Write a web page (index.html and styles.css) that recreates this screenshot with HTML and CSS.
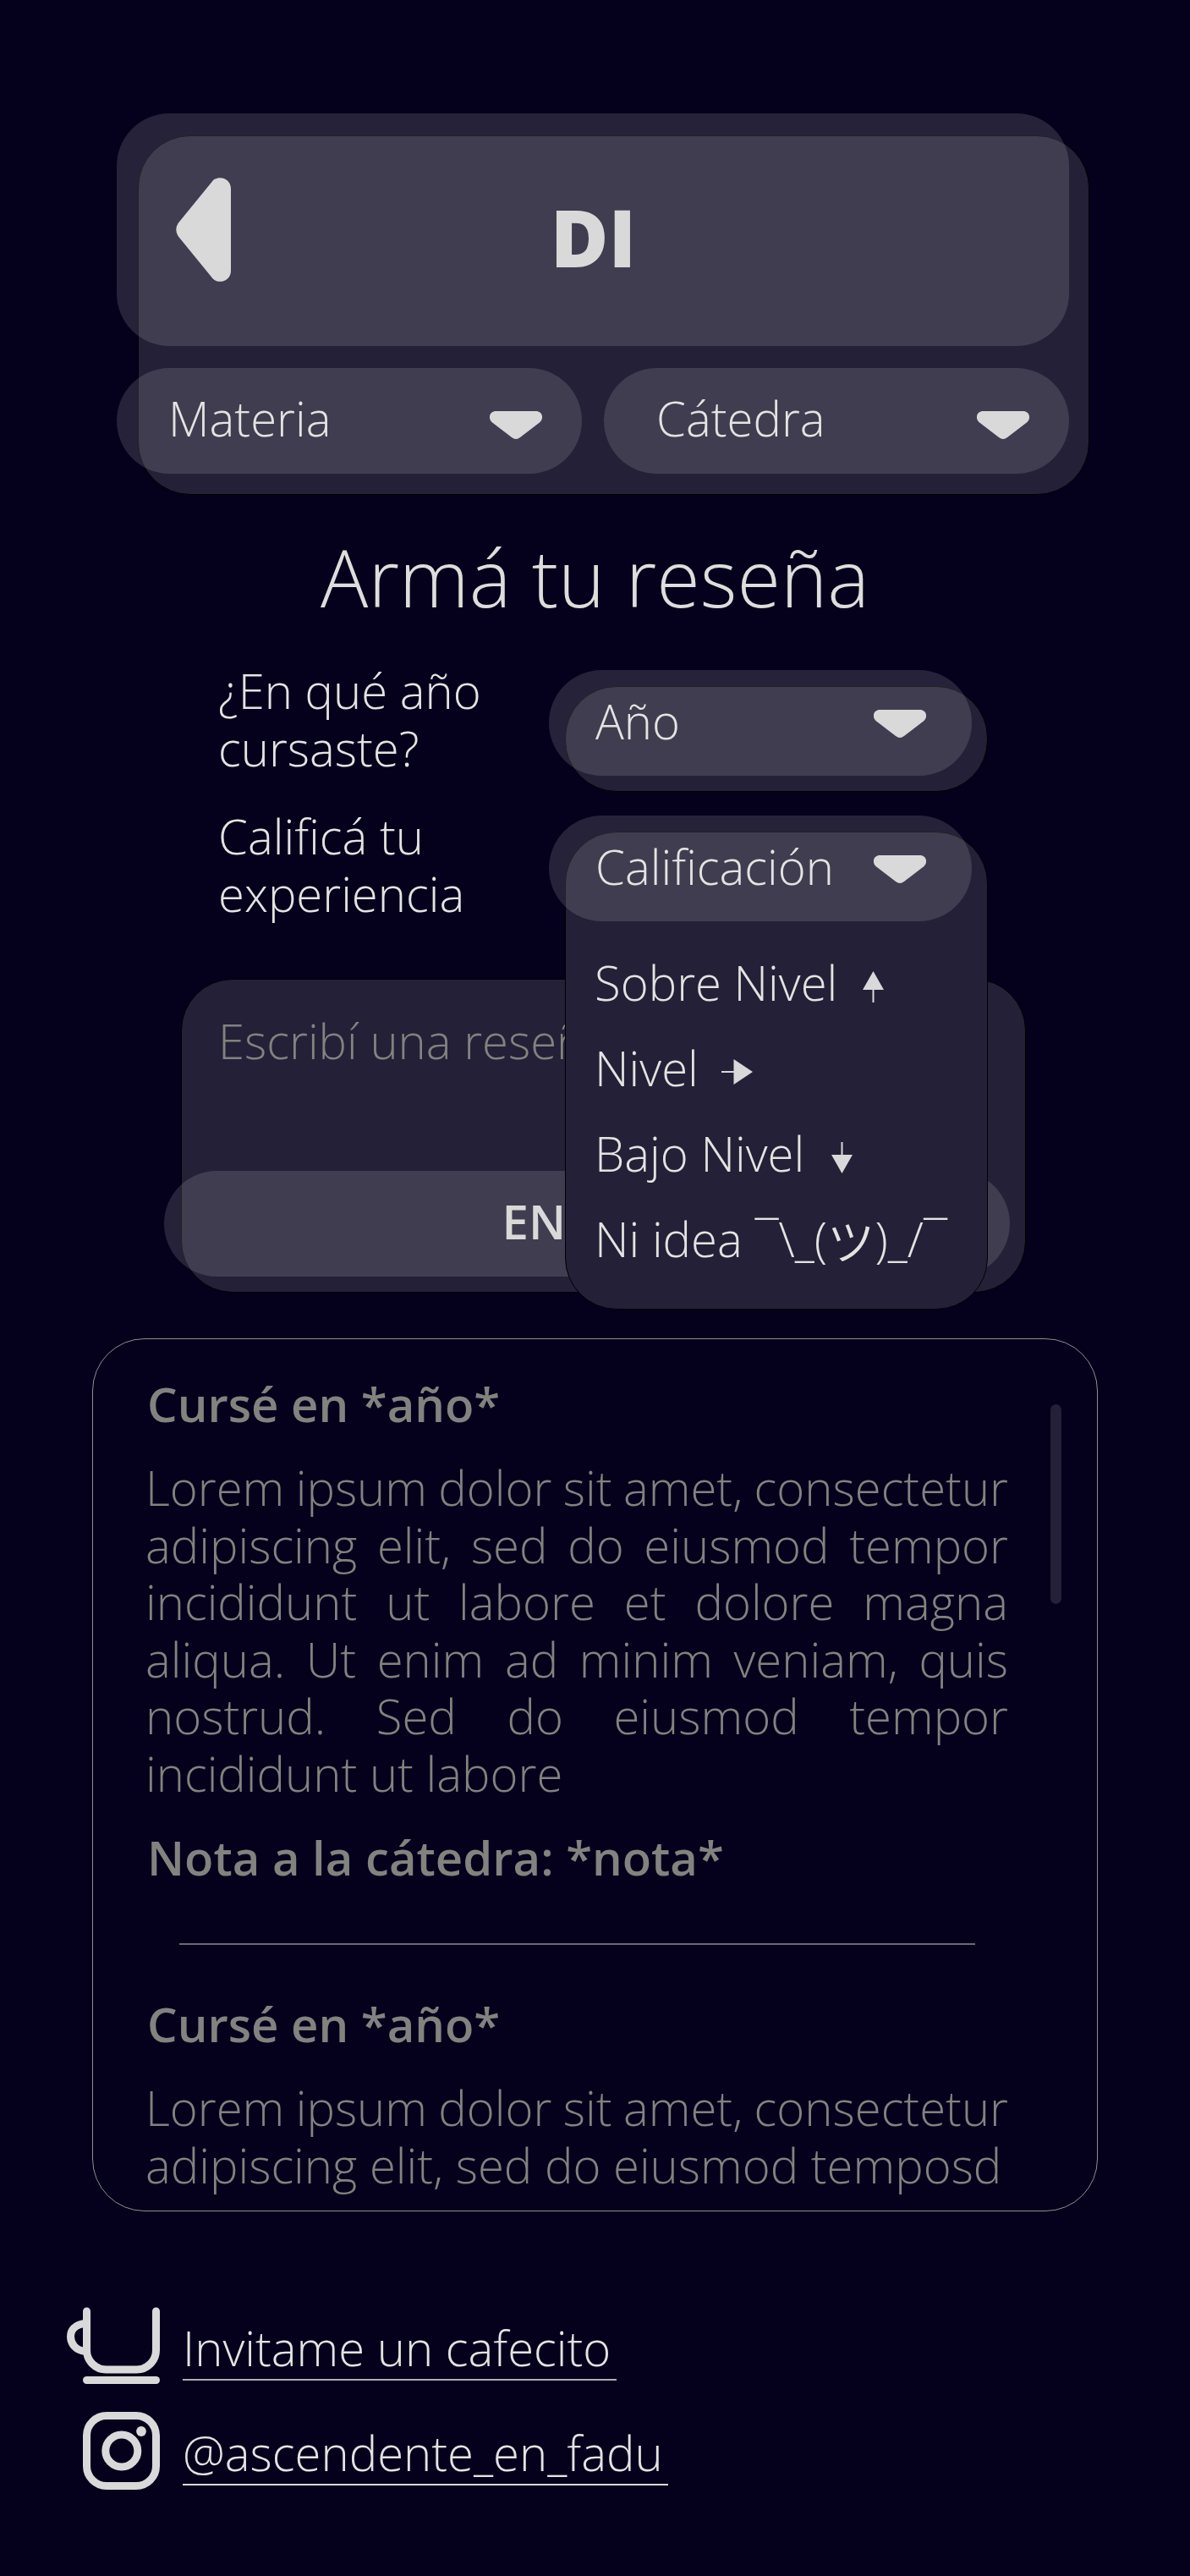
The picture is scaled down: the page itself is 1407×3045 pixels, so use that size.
FILE: index.html
```html
<!DOCTYPE html>
<html lang="es">
<head>
<meta charset="utf-8">
<title>DI – Armá tu reseña</title>
<link rel="stylesheet" href="styles.css">
</head>
<body>
<svg class="defs" width="0" height="0" aria-hidden="true">
  <symbol id="caret" viewBox="0 0 62 33"><path d="M7.500 0H54.500C62 0 64.500 8 59.500 13L36 31Q31 35 26 31L2.500 13C-2.500 8 0 0 7.500 0Z"/></symbol>
</svg>

<header class="top">
  <div class="bar">
    <a class="back" href="#" aria-label="Volver"><svg width="65" height="123" viewBox="0 0 65 123"><path d="M65 13V110C65 123 49 127 42.500 118L2.500 69Q-2 61.500 2.500 54L42.500 5C49-4 65 0 65 13Z"/></svg></a>
    <h1>DI</h1>
  </div>
  <div class="filters">
    <button class="pill materia"><span>Materia</span><svg class="caret"><use href="#caret"/></svg></button>
    <button class="pill catedra"><span>Cátedra</span><svg class="caret"><use href="#caret"/></svg></button>
  </div>
</header>

<main>
  <h2>Armá tu reseña</h2>
  <form class="form">
    <div class="field">
      <label>¿En qué año<br>cursaste?</label>
      <div class="select">
        <div class="plate"></div>
        <div class="pill"><span>Año</span><svg class="caret"><use href="#caret"/></svg></div>
      </div>
    </div>
    <div class="field open">
      <label>Calificá tu<br>experiencia</label>
      <div class="select">
        <div class="plate menu">
          <ul>
            <li>Sobre Nivel <svg class="up" width="25" height="37" viewBox="0 0 25 37"><path d="M12.500 0L25 22H13.500V37H11.500V22H0Z"/></svg></li>
            <li>Nivel <svg class="right" width="37" height="30" viewBox="0 0 37 30"><path d="M37 15L14.500 30V16H0V14H14.500V0Z"/></svg></li>
            <li>Bajo Nivel <svg class="down" width="25" height="37" viewBox="0 0 25 37"><path d="M12.500 37L25 15H13.500V0H11.500V15H0Z"/></svg></li>
            <li>Ni idea ¯\_(<span class="tsu">ツ</span>)_/¯</li>
          </ul>
        </div>
        <div class="pill"><span>Calificación</span><svg class="caret"><use href="#caret"/></svg></div>
      </div>
    </div>
    <div class="review">
      <p class="placeholder">Escribí una reseña</p>
      <button class="pill send">ENVIAR</button>
    </div>
  </form>

  <section class="list">
    <article>
      <h3>Cursé en *año*</h3>
      <p>Lorem ipsum dolor sit amet, consectetur adipiscing elit, sed do eiusmod tempor incididunt ut labore et dolore magna aliqua. Ut enim ad minim veniam, quis nostrud. Sed do eiusmod tempor incididunt ut labore</p>
      <h3 class="nota">Nota a la cátedra: *nota*</h3>
    </article>
    <hr>
    <article>
      <h3>Cursé en *año*</h3>
      <p>Lorem ipsum dolor sit amet, consectetur adipiscing elit, sed do eiusmod temposd</p>
    </article>
    <div class="scroll"></div>
  </section>
</main>

<footer>
  <a href="#">
    <svg width="110" height="92" viewBox="0 0 110 92"><g fill="none" stroke="#d9d9d9" stroke-width="9"><path stroke-linecap="round" d="M23.500 5V51a23 23 0 0 0 23 23H82.500a23 23 0 0 0 23-23V5"/><path d="M21 19.500C9 21 4.500 28 4.500 35S9 51 22 52.500"/><path stroke-linecap="round" d="M23.500 86.500H105.500"/></g></svg>
    <span class="cafecito">Invitame un cafecito</span>
  </a>
  <a href="#">
    <svg width="110" height="92" viewBox="0 0 110 92"><g fill="none" stroke="#d9d9d9" stroke-width="9"><rect x="23.500" y="4.500" width="82" height="83" rx="23.500"/><circle cx="64.800" cy="46" r="19"/></g><circle cx="88" cy="23" r="5.900" fill="#d9d9d9"/></svg>
    <span class="insta">@ascendente_en_fadu</span>
  </a>
</footer>
</body>
</html>
```

FILE: styles.css
```css
* { box-sizing: border-box; margin: 0; padding: 0; }

body {
  width: 1407px;
  height: 3045px;
  overflow: hidden;
  background: #05001c;
  color: #e3e3e1;
  font-family: "Open Sans", "Noto Sans CJK JP", sans-serif;
  font-size: 56.25px;
  font-weight: 300;
  line-height: 67.5px;
}

.defs { display: block; height: 0; }
svg { fill: #d9d9d9; flex: none; }
.caret { width: 62px; height: 33px; }
a { color: inherit; text-decoration: none; }
ul { list-style: none; }

.pill {
  position: relative;
  display: flex;
  align-items: center;
  justify-content: space-between;
  height: 125px;
  border: 0;
  border-radius: 62.5px;
  background: rgba(217, 217, 217, .155);
  color: inherit;
  font: inherit;
}

/* Header */
.top { position: relative; width: 1126px; margin: 134px 0 0 138px; }
.top::before {
  content: "";
  position: absolute;
  inset: 26px -24px -25px 25px;
  border: 1.500px solid #000;
  border-radius: 62px;
  background: #242037;
}
.bar {
  position: relative;
  display: grid;
  grid-template-columns: 1fr auto 1fr;
  height: 275px;
  border-radius: 62px;
  background: rgba(217, 217, 217, .155);
}
.back { margin: 76px 0 0 70px; line-height: 0; }
h1 { margin: 96px 0 0 1px; font-size: 93.75px; font-weight: 800; line-height: 100px; color: #d9d9d9; }
.filters { display: grid; grid-template-columns: 550px 550px; justify-content: space-between; margin-top: 26px; }
.materia { padding: 0 47px 5px 61px; }
.catedra { padding: 0 47px 5px 62px; }
.filters .caret { position: relative; top: 7px; }

/* Review form */
h2 { margin-top: 72px; font-size: 93.75px; font-weight: 300; line-height: 100px; text-align: center; color: #dddddb; }
.form { margin: 51px 0 0 194px; width: 1018px; }
.field { display: grid; grid-template-columns: 391px 500px; height: 172px; padding-left: 64px; }
.select { position: relative; margin-top: 9px; }
.plate {
  position: absolute;
  top: 19px;
  left: 19px;
  width: 500px;
  height: 125px;
  border: 1.500px solid #000;
  border-radius: 61px;
  background: #242037;
}
.select .pill { align-items: flex-start; padding: 27px 54px 0 55px; }
.select .caret { margin-top: 20px; }
.open { position: relative; z-index: 2; }
.menu { height: 565px; padding: 144px 0 0 34px; }
.menu li { display: flex; height: 101px; white-space: pre; }
.up { margin: 20px 0 0 15px; }
.right { margin: 23px 0 0 13px; }
.down { margin: 20px 0 0 17px; }
.tsu { font-family: "Noto Sans CJK JP DemiLight", "Noto Sans CJK JP", sans-serif; font-weight: 350; }

.review {
  width: 999px;
  height: 371px;
  margin: 30px 0 0 20px;
  padding: 39px 0 0 43px;
  border: 1.500px solid #000;
  border-radius: 61px;
  background: #242037;
}
.placeholder { color: #82827f; }
.review .send {
  justify-content: center;
  width: 1000px;
  margin: 119px 0 0 -64px;
  padding-bottom: 4px;
  color: #d9d9d9;
  font-weight: 600;
}

/* Review list */
.list {
  position: relative;
  width: 1189px;
  height: 1032px;
  margin: 54px 0 0 109px;
  padding: 43px 105px 0 62px;
  border: 1px solid #8f8f8c;
  border-radius: 62px;
  color: #82827f;
}
.list h3 { margin-left: 2px; font-size: 56.25px; font-weight: 600; }
.list p { margin-top: 31.5px; text-align: justify; }
.list p::first-line { word-spacing: -3px; }
.list .nota { margin-top: 31.5px; }
hr { width: 941px; height: 2px; margin: 68px 0 60px 40px; border: 0; background: #6b6970; }
.scroll { position: absolute; top: 77px; left: 1132px; width: 13px; height: 236px; border-radius: 6.500px; background: #242037; }

/* Footer */
footer { margin: 113px 0 0 79px; }
footer a { display: flex; height: 124px; }
footer span { height: 87px; margin-left: 27px; padding-top: 15px; border-bottom: 2px solid #b0aeb4; }
footer .insta { border-color: #d9d9d9; }
.cafecito { width: 513px; }
.insta { width: 574px; }
```
